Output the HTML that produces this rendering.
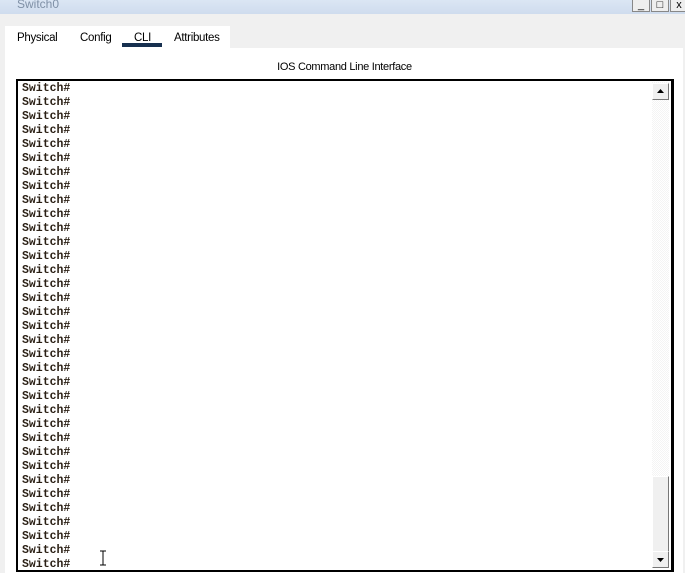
<!DOCTYPE html><html><head><style>
body{margin:0;width:685px;height:573px;background:#f0f0f0;position:relative;overflow:hidden;font-family:"Liberation Sans",sans-serif}
.title{position:absolute;left:0;top:0;width:685px;height:14px;background:linear-gradient(#dbe6f4,#cfdcee)}
.title span{position:absolute;left:17px;top:-3px;font-size:12px;color:#7f90a6}
.wb{position:absolute;top:0;width:16px;height:11px;background:#eee;border:1px solid #888;border-top:none;font-size:11px;line-height:10px;text-align:center}
.panel{position:absolute;left:5px;top:48px;width:678px;height:525px;background:#fff}
.tabs{position:absolute;left:5px;top:26px;width:225px;height:22px;background:#fff;font-size:11.5px;letter-spacing:-0.3px}
.tabs span{position:absolute;top:6px}
.ul{position:absolute;left:122px;top:43px;width:40px;height:4px;background:#17304f}
.hd{position:absolute;left:0;width:685px;top:61px;text-align:center;font-size:11px;letter-spacing:-0.3px;color:#000;padding-left:4px;box-sizing:border-box}
.term{position:absolute;left:16px;top:79px;width:653px;height:489px;border:2px solid #000;border-right-width:3px;background:#fff}
pre{margin:0;position:absolute;left:4px;top:1px;font:bold 11.5px/14px "Liberation Mono",monospace;color:#2a1f14}
.sb{position:absolute;left:634px;top:1px;width:17px;height:486px;background:repeating-conic-gradient(#fff 0 25%,#f4f4f4 0 50%) 0 0/2px 2px}
.btn{position:absolute;left:0;width:15px;height:15px;background:#f0f0f0;border:1px solid;border-color:#fff #777 #777 #fff}
</style></head><body>
<div class="title"><span>Switch0</span></div>
<div class="wb" style="left:632px">_</div><div class="wb" style="left:651px">□</div><div class="wb" style="left:670px;border-right:none">x</div>
<div class="panel"></div>
<div class="tabs"><span style="left:12px">Physical</span><span style="left:75px">Config</span><span style="left:129px">CLI</span><span style="left:169px">Attributes</span></div>
<div class="ul"></div>
<div class="hd">IOS Command Line Interface</div>
<div class="term"><pre>Switch#
Switch#
Switch#
Switch#
Switch#
Switch#
Switch#
Switch#
Switch#
Switch#
Switch#
Switch#
Switch#
Switch#
Switch#
Switch#
Switch#
Switch#
Switch#
Switch#
Switch#
Switch#
Switch#
Switch#
Switch#
Switch#
Switch#
Switch#
Switch#
Switch#
Switch#
Switch#
Switch#
Switch#
Switch#</pre>
<div class="sb">
<div class="btn" style="top:1px"><svg width="15" height="15"><path d="M4 9h7L7.5 5z" fill="#000"/></svg></div>
<div class="btn" style="top:394px;height:74px"></div>
<div class="btn" style="top:469px"><svg width="15" height="15"><path d="M4 6h7L7.5 10z" fill="#000"/></svg></div>
</div></div>
<svg style="position:absolute;left:98px;top:550px" width="10" height="16"><path d="M2 1h6M5 1v14M2 15h6" stroke="#000" fill="none"/></svg>
</body></html>
